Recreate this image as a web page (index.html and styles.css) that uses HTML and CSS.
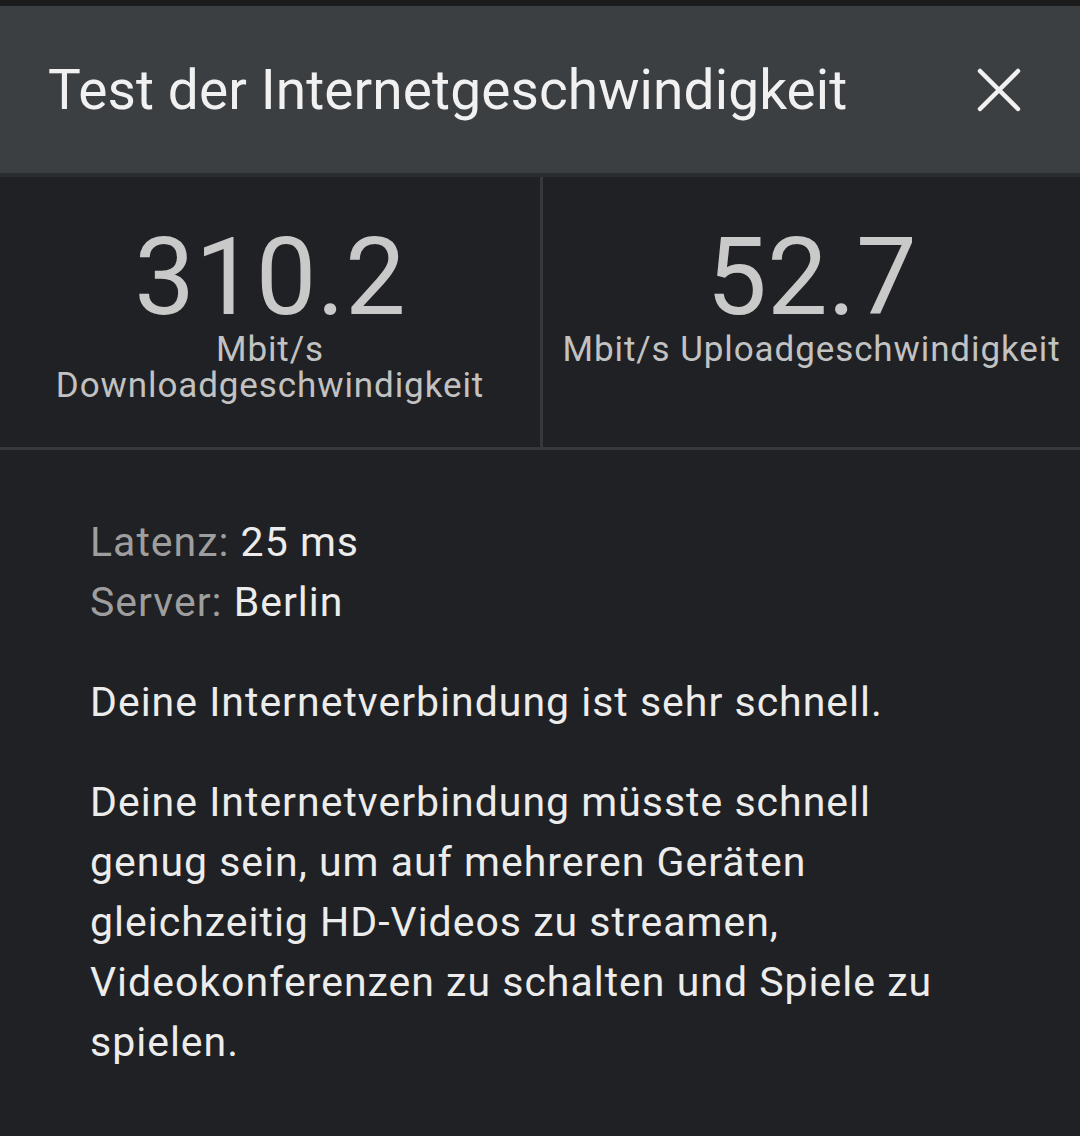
FILE: index.html
```html
<!DOCTYPE html>
<html lang="de">
  <head>
    <meta charset="UTF-8" />
    <meta name="viewport" content="width=device-width, initial-scale=1.0" />
    <title>Test der Internetgeschwindigkeit</title>
    <link rel="stylesheet" href="styles.css">
  </head>
  <body>
    <div class="top-strip"></div>

    <header class="dialog-header">
      <h1>Test der Internetgeschwindigkeit</h1>
      <button class="close" aria-label="Schließen">
        <svg width="44" height="44" viewBox="0 0 44 44">
          <path d="M3 3 L41 41 M41 3 L3 41" stroke="#f1f1f1" stroke-width="4.5" stroke-linecap="round" fill="none" />
        </svg>
      </button>
    </header>

    <!-- Speed results -->
    <section class="speeds">
      <div class="speed">
        <div class="value">310.2</div>
        <div class="unit">Mbit/s Downloadgeschwindigkeit</div>
      </div>
      <div class="speed">
        <div class="value">52.7</div>
        <div class="unit">Mbit/s Uploadgeschwindigkeit</div>
      </div>
    </section>

    <!-- Details -->
    <section class="details">
      <div class="meta">
        <div><span class="label">Latenz:</span> 25 ms</div>
        <div><span class="label">Server:</span> Berlin</div>
      </div>
      <p>Deine Internetverbindung ist sehr schnell.</p>
      <p>Deine Internetverbindung müsste schnell genug sein, um auf mehreren Geräten gleichzeitig HD-Videos zu streamen, Videokonferenzen zu schalten und Spiele zu spielen.</p>
    </section>
  </body>
</html>
```

FILE: styles.css
```css
body {
  margin: 0;
  padding: 0;
  background-color: #202124;
  font-family: 'Roboto', sans-serif;
  color: #e8eaed;
  width: 1080px;
  height: 1136px;
  overflow: hidden;
}

.top-strip {
  height: 6px;
  background-color: #1c1c1d;
}

.dialog-header {
  height: 167px;
  background-color: #3c3f42;
  display: flex;
  align-items: center;
  justify-content: space-between;
  padding: 0 59px 0 48px;
  border-bottom: 4px solid #2a2c2f;
}

.dialog-header h1 {
  margin: 0;
  font-weight: 400;
  font-size: 55px;
  color: #f1f1f1;
  letter-spacing: 0.1px;
}

.close {
  background: none;
  border: none;
  padding: 0;
  display: flex;
}

.speeds {
  display: grid;
  grid-template-columns: 540px 1fr;
  height: 270px;
  border-bottom: 3px solid #36383b;
}

.speed {
  text-align: center;
  padding-top: 50px;
}

.speed + .speed {
  border-left: 3px solid #36383b;
}

.value {
  font-size: 108px;
  line-height: 100px;
  color: #c9c9c9;
}

.unit {
  margin-top: 5px;
  font-size: 35px;
  line-height: 36px;
  letter-spacing: 0.9px;
  color: #c2c2c2;
  padding: 0 50px;
}

.speed + .speed .unit {
  padding: 0 4px;
}

.details {
  width: 860px;
  padding: 62px 0 0 90px;
  font-size: 41px;
  line-height: 60px;
  letter-spacing: 1px;
  color: #ececec;
}

.label {
  color: #9e9e9e;
}

.details p {
  margin: 40px 0 0 0;
}
```
